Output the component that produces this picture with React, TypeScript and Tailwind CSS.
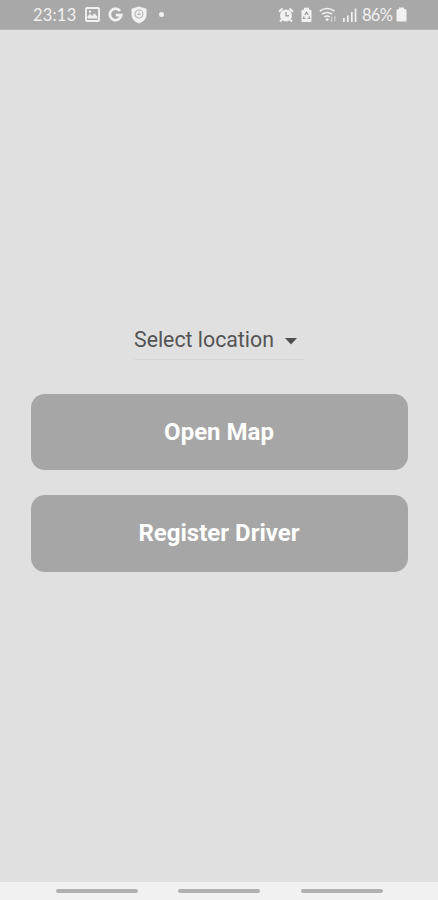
import { useState } from 'react';

type ActionButtonProps = {
  label: string;
  className: string;
  onClick?: () => void;
};

function ActionButton({ label, className, onClick }: ActionButtonProps) {
  return (
    <button
      onClick={onClick}
      className={`w-full rounded-[14px] bg-[#a6a6a6] text-white font-bold text-[24px] ${className}`}
    >
      {label}
    </button>
  );
}

function StatusBar() {
  return (
    <header className="h-[30px] shrink-0 bg-[#a8a8a8] border-b border-[#b4b4b4] text-[#f1f1f1] flex items-center justify-between pl-[33px] pr-[31px]">
      <div className="flex items-center h-full">
        <span className="w-[44px] shrink-0 pt-[2px] font-['Lato',sans-serif] text-[16.5px] leading-none tracking-[0.2px] whitespace-nowrap">23:13</span>
        {/* Gallery */}
        <svg className="w-[15px] h-[15px] ml-[8px]" viewBox="0 0 15 15" fill="none" stroke="currentColor">
          <rect x="1" y="1" width="13" height="13" rx="1" strokeWidth="1.9" />
          <path d="M2.5 11.5V9.5l2.5-2.7 2.2 2.2 2.3-2.8 3 3.5v1.8z" fill="currentColor" stroke="none" />
          <circle cx="5" cy="4.6" r="1.2" fill="currentColor" stroke="none" />
        </svg>
        {/* Google */}
        <svg className="w-[15px] h-[15px] ml-[8px]" viewBox="0 0 15 15" fill="none" stroke="currentColor" strokeWidth="2.7">
          <path d="M12 3.8A5.7 5.7 0 1 0 13.2 8.2H7.8" />
        </svg>
        {/* Shield */}
        <svg className="w-[16px] h-[18px] ml-[8px]" viewBox="0 0 16 18">
          <path d="M8 .5l7.500 2.300v5.700c0 4.200-3 7.200-7.500 9-4.500-1.800-7.500-4.800-7.500-9V2.800z" fill="currentColor" />
          <circle cx="8" cy="8" r="4" fill="none" stroke="#b8b8b8" strokeWidth="1.2" />
          <path d="M8 5.800v2.400M6 8.500h4" stroke="#b8b8b8" strokeWidth="1.1" />
        </svg>
        <span className="w-[5px] h-[5px] rounded-full bg-[#f1f1f1] ml-[12px]" />
      </div>

      <div className="flex items-center h-full">
        {/* Alarm */}
        <svg className="w-[16px] h-[16px]" viewBox="0 0 16 16" fill="none" stroke="currentColor">
          <path d="M1 4.8L4.6 1.4M15 4.8l-3.6-3.4M4 12.5l-2 2M12 12.5l2 2" strokeWidth="2" />
          <circle cx="8" cy="8.5" r="6" fill="currentColor" stroke="none" />
          <path d="M8 5v3.8h3" stroke="#a3a3a3" strokeWidth="1.4" />
        </svg>
        {/* Power saving */}
        <svg className="w-[11px] h-[16px] ml-[7px]" viewBox="0 0 11 16">
          <path d="M3 .8h5v2h1.5a1 1 0 0 1 1 1V14a1 1 0 0 1-1 1h-8a1 1 0 0 1-1-1V3.8a1 1 0 0 1 1-1H3z" fill="currentColor" />
          <path d="M3.8 7.8L5.5 5.2l1.7 2.6M8 9.300l.6 2.200H6.600M4.700 11.500H2.400L3 9.300" fill="none" stroke="#a0a0a0" strokeWidth="1.2" />
        </svg>
        {/* Wifi with traffic arrows */}
        <svg className="w-[18px] h-[16px] ml-[7px]" viewBox="0 0 18 16" fill="none" stroke="currentColor">
          <path d="M.8 4.200Q8 -1 15.500 4.200M3 7.200q5-3.600 10.300 0M5.300 10q2.800-2 5.600 0" strokeWidth="1.5" />
          <circle cx="8.200" cy="12.600" r="1.4" fill="currentColor" stroke="none" />
          <path d="M12.800 9.500v5M11.600 13l1.200 1.500M15.800 14.500v-5M17 11l-1.200-1.500" strokeWidth=".9" opacity=".7" />
        </svg>
        {/* Signal */}
        <svg className="w-[14px] h-[16px] ml-[6px]" viewBox="0 0 14 16" fill="currentColor">
          <rect x="0" y="11" width="1.7" height="4" />
          <rect x="4" y="8.5" width="1.7" height="6.5" />
          <rect x="8" y="5" width="1.7" height="10" />
          <rect x="11.7" y="1.5" width="1.7" height="13.5" />
        </svg>
        <span className="w-[31px] ml-[5px] pt-[2px] font-['Lato',sans-serif] text-[16.5px] leading-none tracking-[-0.7px] whitespace-nowrap">86%</span>
        <svg className="w-[11px] h-[15px] ml-[3px]" viewBox="0 0 11 15" fill="currentColor">
          <path d="M3 .5h5v1.700H9.500a1 1 0 0 1 1 1V13.500a1 1 0 0 1-1 1h-8a1 1 0 0 1-1-1V3.200a1 1 0 0 1 1-1H3z" />
        </svg>
      </div>
    </header>
  );
}

export default function App() {
  const [open, setOpen] = useState(false);

  return (
    <div className="h-screen bg-[#e0e0e0] flex flex-col overflow-hidden font-['Roboto',sans-serif]">
      <StatusBar />

      <main className="flex-1 flex flex-col items-center px-[30.5px] pt-[290px]">
        <button
          onClick={() => setOpen(!open)}
          className="w-[170px] h-[40px] pt-px border-b border-[#d7d7d7] flex items-center justify-between pr-[7.5px] text-[21.3px] text-[#545454] whitespace-nowrap"
        >
          <span>Select location</span>
          <svg className="w-[12px] h-[7px] mt-[2px]" viewBox="0 0 12 7">
            <path d="M0 0h12L6 6.5z" fill="#505050" />
          </svg>
        </button>

        <ActionButton label="Open Map" className="mt-[34px] h-[76px]" />
        <ActionButton label="Register Driver" className="mt-[25px] h-[77px] pb-[2px]" />
      </main>

      <nav className="h-[18px] shrink-0 bg-[#f1f1f1] flex justify-center gap-[40.5px] pt-[7px]">
        <span className="w-[82px] h-[4px] rounded-full bg-[#b0b0b0]" />
        <span className="w-[82px] h-[4px] rounded-full bg-[#b0b0b0]" />
        <span className="w-[82px] h-[4px] rounded-full bg-[#b0b0b0]" />
      </nav>
    </div>
  );
}
